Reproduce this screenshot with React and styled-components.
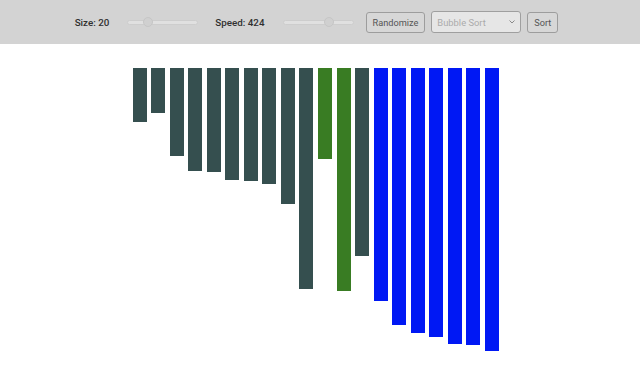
import React from "react";
import styled, { createGlobalStyle } from "styled-components";

const GlobalStyle = createGlobalStyle`
  html, body {
    margin: 0;
    padding: 0;
    background: #ffffff;
    font-family: Roboto, "Liberation Sans", Arial, sans-serif;
  }
`;

const Toolbar = styled.header`
  height: 44px;
  background: #d3d3d3;
  display: flex;
  align-items: center;
  justify-content: center;
  padding-right: 1px;
  box-sizing: border-box;
`;

const Label = styled.span`
  font-size: 9.8px;
  font-weight: 500;
  color: #303030;
  margin-right: 18px;
  white-space: nowrap;
`;

const Slider = styled.input`
  -webkit-appearance: none;
  appearance: none;
  width: 71px;
  height: 10px;
  margin: 0 ${(p) => p.$after}px 0 0;
  background: transparent;
  padding: 0;

  &::-webkit-slider-runnable-track {
    height: 5px;
    border-radius: 3px;
    background: #e0e0e0;
    border: 1px solid #cdcdcd;
    box-sizing: border-box;
  }
  &::-webkit-slider-thumb {
    -webkit-appearance: none;
    appearance: none;
    width: 10px;
    height: 10px;
    border-radius: 50%;
    background: #d0d0d0;
    border: 1px solid #c6c6c6;
    box-sizing: border-box;
    margin-top: -3.5px;
  }
`;

const Button = styled.button`
  height: 21px;
  padding: 0 6px;
  margin-right: 6px;
  font-family: Roboto, "Liberation Sans", Arial, sans-serif;
  font-size: 9.2px;
  color: #555;
  background: #d7d7d7;
  border: 1px solid #9d9d9d;
  border-radius: 3px;
  box-sizing: border-box;
`;

const SelectWrap = styled.div`
  position: relative;
  margin-right: 6px;
`;

const Select = styled.select`
  -webkit-appearance: none;
  appearance: none;
  width: 90px;
  height: 22px;
  padding: 0 0 0 5px;
  font-family: Roboto, "Liberation Sans", Arial, sans-serif;
  font-size: 9.4px;
  color: #9a9a9a;
  background: #efefef;
  border: 1px solid #8a8a8a;
  border-radius: 3px;
  box-sizing: border-box;
`;

const Chevron = styled.svg`
  position: absolute;
  right: 6px;
  top: 9px;
  pointer-events: none;
`;

const Stage = styled.main`
  display: flex;
  justify-content: center;
  align-items: flex-start;
  gap: 4.55px;
  padding: 24px 8.5px 0 0;
`;

const Bar = styled.div`
  width: 14px;
  flex: none;
  background: ${(p) => p.$color};
`;

const SLATE = "#354f4f";
const GREEN = "#397c23";
const BLUE = "#0018f4";

const bars = [
  [54, SLATE], [45, SLATE], [88, SLATE], [103, SLATE], [104, SLATE],
  [112, SLATE], [113, SLATE], [116, SLATE], [136, SLATE], [221, SLATE],
  [91, GREEN], [223, GREEN], [188, SLATE], [233, BLUE], [257, BLUE],
  [265, BLUE], [269, BLUE], [276, BLUE], [277, BLUE], [283, BLUE],
];

export default function App() {
  return (
    <>
      <GlobalStyle />
      <Toolbar>
        <Label>Size: 20</Label>
        <Slider type="range" min="0" max="100" defaultValue="25" disabled $after={17} />
        <Label>Speed: 424</Label>
        <Slider type="range" min="0" max="100" defaultValue="69" disabled $after={12} />
        <Button disabled>Randomize</Button>
        <SelectWrap>
          <Select defaultValue="bubble" disabled>
            <option value="bubble">Bubble Sort</option>
            <option value="merge">Merge Sort</option>
            <option value="quick">Quick Sort</option>
          </Select>
          <Chevron width="6" height="4" viewBox="0 0 6 4">
            <path d="M0.5 0.5 L3 3 L5.5 0.5" fill="none" stroke="#8a8a8a" strokeWidth="1" />
          </Chevron>
        </SelectWrap>
        <Button disabled>Sort</Button>
      </Toolbar>
      <Stage>
        {bars.map(([h, c], i) => (
          <Bar key={i} $color={c} style={{ height: h }} />
        ))}
      </Stage>
    </>
  );
}
